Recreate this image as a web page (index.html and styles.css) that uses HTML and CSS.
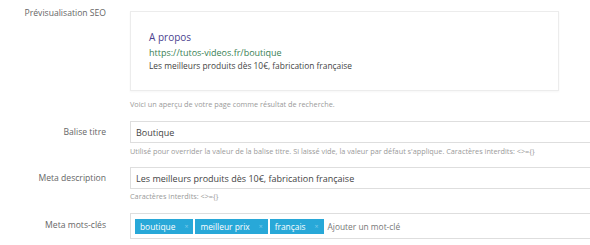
FILE: index.html
```html
<!DOCTYPE html>
<html lang="fr">

<head>
    <meta charset="UTF-8">
    <meta name="viewport" content="width=device-width, initial-scale=1.0">
    <title>SEO</title>
    <link rel="stylesheet" href="styles.css">
</head>

<body>
    <div class="form">
        <div class="form-row row-preview">
            <label class="label">Prévisualisation SEO</label>
            <div class="field">
                <div class="serp">
                    <div class="serp-title">A propos</div>
                    <div class="serp-url">https://tutos-videos.fr/boutique</div>
                    <div class="serp-desc">Les meilleurs produits dès 10€, fabrication française</div>
                </div>
                <p class="help help-preview">Voici un aperçu de votre page comme résultat de recherche.</p>
            </div>
        </div>

        <div class="form-row">
            <label class="label">Balise titre</label>
            <div class="field">
                <input class="input" type="text" value="Boutique">
                <p class="help">Utilisé pour overrider la valeur de la balise titre. Si laissé vide, la valeur par défaut s'applique. Caractères interdits: &lt;&gt;={}</p>
            </div>
        </div>

        <div class="form-row">
            <label class="label">Meta description</label>
            <div class="field">
                <input class="input" type="text" value="Les meilleurs produits dès 10€, fabrication française">
                <p class="help help-short">Caractères interdits: &lt;&gt;={}</p>
            </div>
        </div>

        <div class="form-row row-tags">
            <label class="label">Meta mots-clés</label>
            <div class="field">
                <div class="tags">
                    <span class="tag">boutique <span class="tag-x">×</span></span>
                    <span class="tag">meilleur prix <span class="tag-x">×</span></span>
                    <span class="tag">français <span class="tag-x">×</span></span>
                    <span class="tags-placeholder">Ajouter un mot-clé</span>
                </div>
            </div>
        </div>
    </div>
</body>

</html>
```

FILE: styles.css
```css
body {
    margin: 0;
    font-family: "Open Sans", Arial, sans-serif;
    background-color: #ffffff;
    color: #555;
    overflow: hidden;
}

.form {
    padding-top: 11px;
}

.form-row {
    display: grid;
    grid-template-columns: 106px 1fr;
    column-gap: 24px;
    margin-bottom: 10px;
}

.label {
    text-align: right;
    font-size: 8.6px;
    color: #666;
    line-height: 22px;
    white-space: nowrap;
}

.row-preview .label {
    line-height: 4px;
}

.row-preview {
    margin-bottom: 11px;
}

.row-tags .label {
    line-height: 26px;
}

.field {
    width: 480px;
}

.serp {
    box-sizing: border-box;
    width: 429px;
    height: 80px;
    padding: 18px 20px 0 18px;
    border: 1px solid #ececec;
    box-shadow: 0 1px 2px rgba(0, 0, 0, 0.04);
}

.serp-title {
    font-size: 10px;
    color: #4b3f8f;
    line-height: 14px;
    margin-bottom: 2px;
}

.serp-url {
    font-size: 9px;
    color: #3a7f55;
    line-height: 14px;
}

.serp-desc {
    font-size: 8.4px;
    color: #444;
    line-height: 12px;
}

.help {
    margin: 3px 0 0;
    font-size: 7.3px;
    color: #9a9a9a;
    line-height: 11px;
    white-space: nowrap;
}

.help-preview {
    margin-top: 8px;
}

.help-short {
    margin-top: 2px;
}

.input {
    display: block;
    box-sizing: border-box;
    width: 100%;
    height: 22px;
    margin: 0;
    padding: 0 5px;
    border: 1px solid #dedede;
    font-family: inherit;
    font-size: 9px;
    color: #444;
}

.tags {
    display: flex;
    align-items: center;
    gap: 2px;
    box-sizing: border-box;
    height: 26px;
    margin-top: 1px;
    padding: 0 4px;
    border: 1px solid #dedede;
}

.tag {
    background-color: #28a8d8;
    color: #ffffff;
    font-size: 8.4px;
    line-height: 15px;
    padding: 0 5px 0 5px;
    display: flex;
    gap: 9px;
}

.tag-x {
    color: #7fcbea;
    font-size: 7px;
}

.tags-placeholder {
    margin-left: 2px;
    font-size: 8.4px;
    color: #777;
}
```
